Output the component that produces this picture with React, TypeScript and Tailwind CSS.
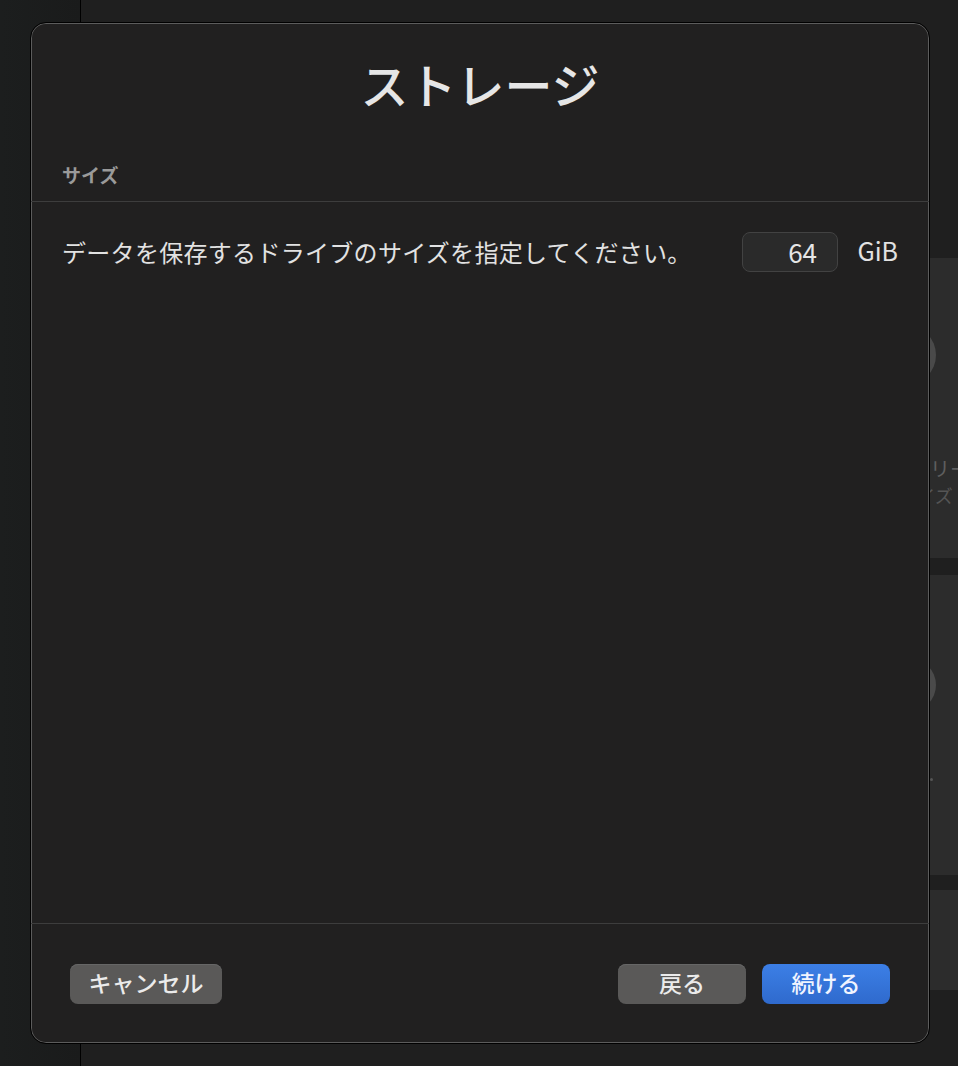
import React from 'react'

const jp = "font-['Noto_Sans_CJK_JP','Noto_Sans',sans-serif]"

const Background: React.FC = () => {
  return (
    <div className="flex h-full w-full">
      {/* sidebar */}
      <div className="w-[81px] shrink-0 border-r border-black bg-gradient-to-r from-[#1c1e1e] to-[#1a1b1b]" />
      {/* main */}
      <div className="flex flex-1 flex-col bg-[#1f1f1f] pt-[258px]">
        <div className="ml-[678px] flex w-[294px] flex-col gap-[17px]">
          <div className="flex h-[300px] flex-col items-center bg-[#2c2c2c]">
            <div className="mt-[67px] h-[60px] w-[60px] rounded-full bg-[#4a4a4a]" />
            <div className={`${jp} mt-[70px] whitespace-nowrap pl-[48px] text-[20px] leading-[28px] text-[#5e5e5e]`}>メモリー</div>
            <div className={`${jp} whitespace-nowrap pl-[40px] text-[18px] leading-[24px] text-[#555]`}>サイズ</div>
          </div>
          <div className="flex h-[300px] flex-col items-center bg-[#2c2c2c]">
            <div className="mt-[83px] h-[54px] w-[60px] rounded-full bg-[#4a4a4a]" />
            <div className="ml-[50px] mt-[66px] h-[3px] w-[3px] rounded-full bg-[#555]" />
          </div>
          <div className="-mt-[2px] h-[100px] bg-[#2c2c2c]" />
        </div>
      </div>
    </div>
  )
}

const App: React.FC = () => {
  return (
    <div className={`${jp} relative h-[1066px] w-full overflow-hidden bg-[#1c1c1c]`}>
      <Background />

      {/* Modal sheet */}
      <div className="absolute left-[30px] top-[22px] flex h-[1022px] w-[900px] flex-col rounded-[16px] border border-black bg-[#212020] shadow-[inset_0_0_0_1px_#5c5c5c]">
        <div className="flex flex-col pt-[31px]">
          <h1 className="text-center text-[48px] font-medium leading-[58px] text-[#e6e6e6]">ストレージ</h1>
          <div className="mt-[49px] pl-[31px] text-[19px] font-bold leading-[28px] text-[#9a9a9a]">サイズ</div>
        </div>
        <div className="mt-[12px] h-px bg-[#3d3d3d]" />

        <div className="flex flex-1 flex-col px-[31px] pt-[30px]">
          <div className="flex items-center">
            <p className="flex-1 text-[24px] leading-[32px] tracking-[0.3px] text-[#e2e2e2]">
              データを保存するドライブのサイズを指定してください。
            </p>
            <div className="flex h-[40px] w-[96px] items-center justify-end rounded-[8px] border border-[#424242] bg-[#2a2a2a] pb-[2px] pr-[20px] text-[26px] text-[#e6e6e6]">
              64
            </div>
            <span className="ml-[18px] w-[42px] whitespace-nowrap pb-[2px] text-right text-[25px] text-[#e2e2e2]">GiB</span>
          </div>
        </div>

        <div className="h-px bg-[#3d3d3d]" />
        <div className="flex items-center px-[39px] pb-[39px] pt-[40px]">
          <button
            type="button"
            className="h-[40px] w-[152px] rounded-[8px] bg-[#5a5958] pb-[3px] text-[23px] font-medium text-[#ebebeb] shadow-[inset_0_1px_0_#666]"
          >
            キャンセル
          </button>
          <div className="flex-1" />
          <button
            type="button"
            className="h-[40px] w-[128px] rounded-[8px] bg-[#5a5958] pb-[3px] text-[23px] font-medium text-[#ebebeb] shadow-[inset_0_1px_0_#666]"
          >
            戻る
          </button>
          <button
            type="button"
            className="ml-[16px] h-[40px] w-[128px] rounded-[8px] bg-gradient-to-b from-[#3c7fe6] to-[#2f6acd] pb-[3px] text-[23px] font-medium text-[#f0f4ff]"
          >
            続ける
          </button>
        </div>
      </div>
    </div>
  )
}

export default App
